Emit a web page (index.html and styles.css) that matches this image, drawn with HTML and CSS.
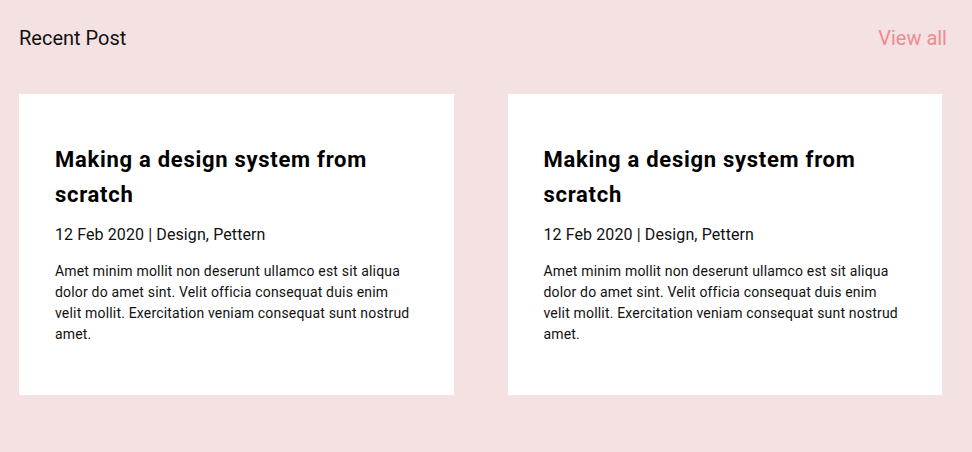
FILE: index.html
```html
<!DOCTYPE html>
<html>
<head>
<meta charset="utf-8">
<link rel="stylesheet" href="styles.css">
</head>
<body>
<main class="page">
  <header class="section-head">
    <h2 class="section-title">Recent Post</h2>
    <a class="view-all" href="#">View all</a>
  </header>
  <div class="posts">
    <article class="card">
      <h3 class="card-title">Making a design system from scratch</h3>
      <p class="card-meta">12 Feb 2020 | Design, Pettern</p>
      <p class="card-text">Amet minim mollit non deserunt ullamco est sit aliqua dolor do amet sint. Velit officia consequat duis enim velit mollit. Exercitation veniam consequat sunt nostrud amet.</p>
    </article>
    <article class="card">
      <h3 class="card-title">Making a design system from scratch</h3>
      <p class="card-meta">12 Feb 2020 | Design, Pettern</p>
      <p class="card-text">Amet minim mollit non deserunt ullamco est sit aliqua dolor do amet sint. Velit officia consequat duis enim velit mollit. Exercitation veniam consequat sunt nostrud amet.</p>
    </article>
  </div>
</main>
</body>
</html>
```
FILE: styles.css
```css
* { box-sizing: border-box; }
html, body {
  margin: 0;
  padding: 0;
  background: #f4e1e2;
  font-family: Roboto, "Liberation Sans", sans-serif;
  color: #111;
}
.page {
  width: 972px;
  height: 452px;
  padding: 26px 30px 0 19px;
}
.section-head {
  display: flex;
  justify-content: space-between;
  align-items: center;
  margin-right: -5px;
  height: 24px;
}
.section-title {
  margin: 0;
  font-size: 20px;
  font-weight: 400;
  line-height: 24px;
  color: #111;
}
.view-all {
  font-size: 20px;
  line-height: 24px;
  color: #ef8a8f;
  text-decoration: none;
}
.posts {
  display: grid;
  grid-template-columns: 1fr 1fr;
  column-gap: 54px;
  margin-top: 44px;
}
.card {
  background: #fff;
  height: 301px;
  padding: 48px 36px 0 36px;
}
.card-title {
  margin: 0;
  font-size: 22px;
  font-weight: 700;
  line-height: 35.2px;
  letter-spacing: 0.72px;
  color: #000;
}
.card-meta {
  margin: 11px 0 0;
  font-size: 16px;
  line-height: 24px;
  letter-spacing: 0.1px;
  color: #111;
}
.card-text {
  margin: 14px 0 0;
  font-size: 14px;
  line-height: 21px;
  letter-spacing: 0.18px;
  color: #111;
}
```
